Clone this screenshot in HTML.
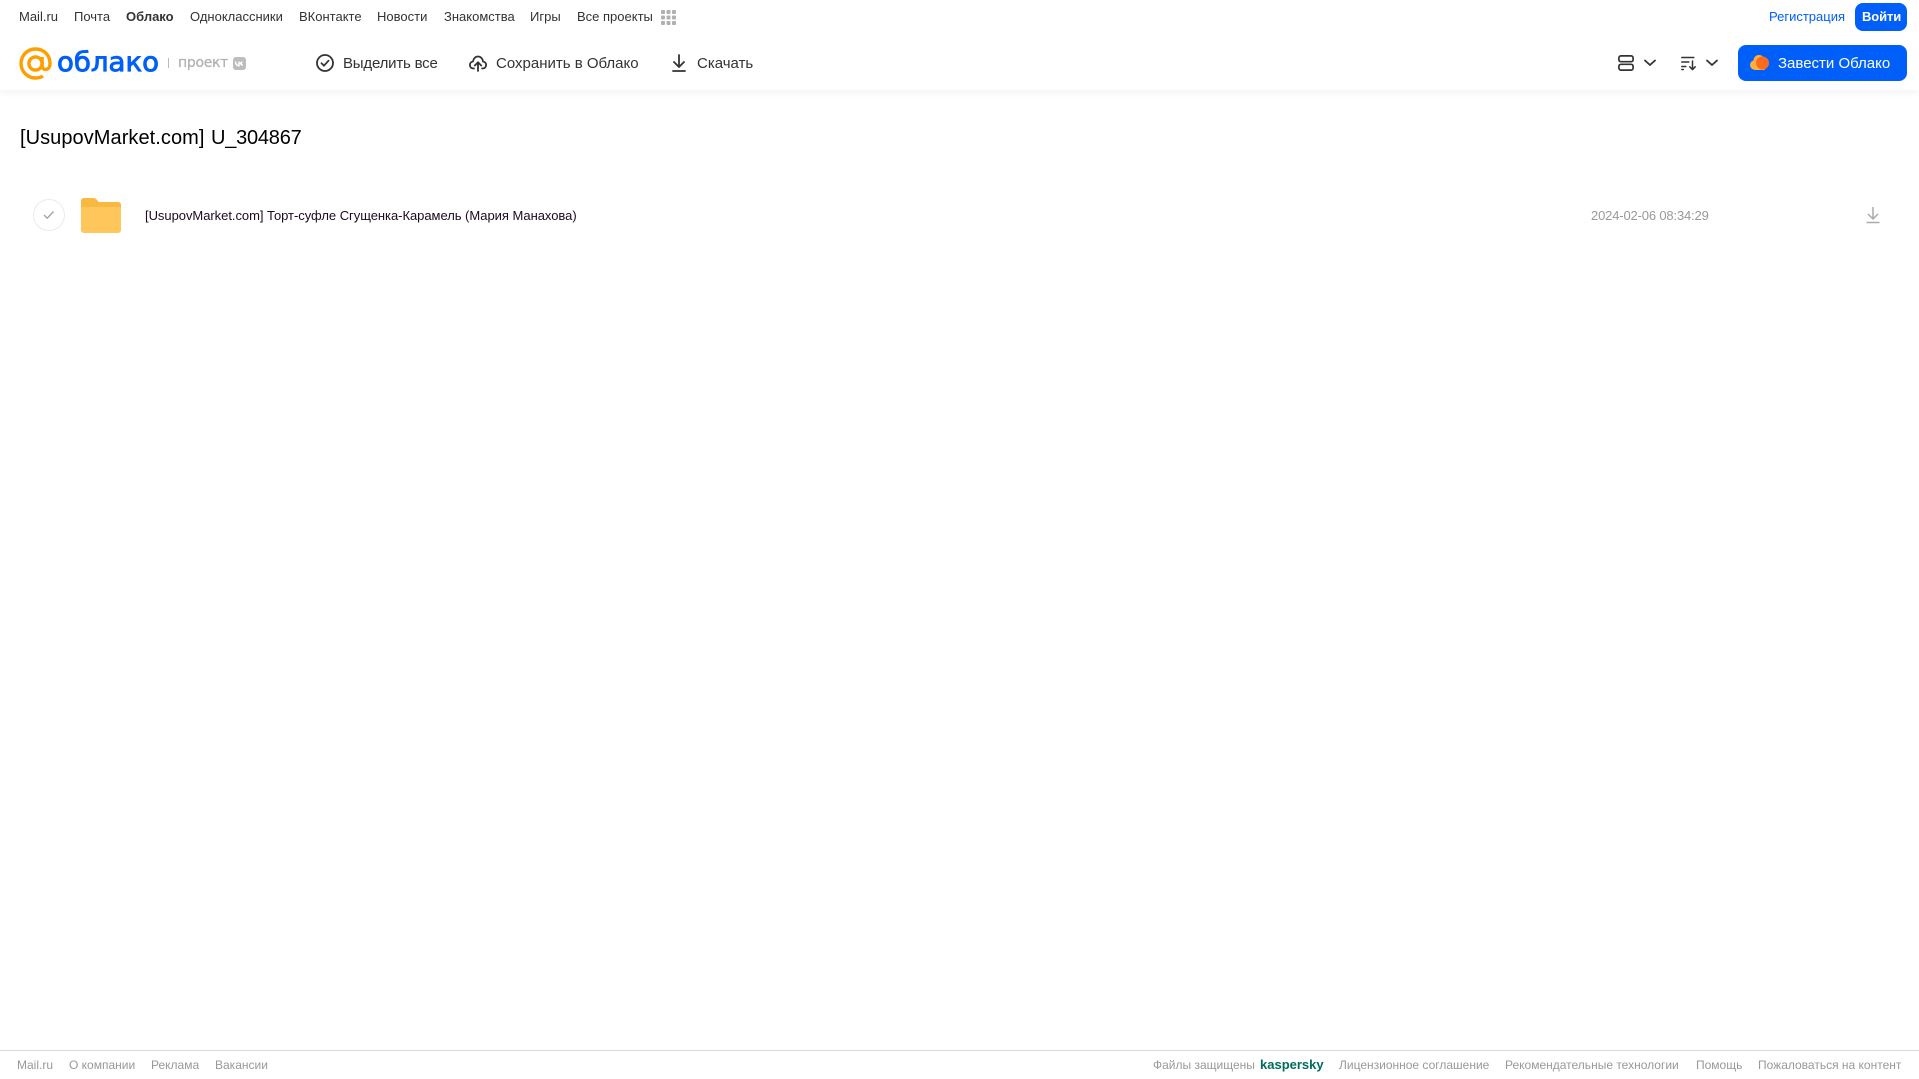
<!DOCTYPE html>
<html lang="ru"><head><meta charset="utf-8"><title>Облако</title>
<style>
html,body{margin:0;padding:0;background:#fff;width:1919px;height:1079px;overflow:hidden}
body{position:relative;font-family:"Liberation Sans",sans-serif}
.t{position:absolute;white-space:nowrap;line-height:20px}
.n{top:7px;font-size:13px;color:#333}
.a{top:54px;font-size:15px;color:#333}
.f{top:1055px;font-size:12px;color:#999}
svg{position:absolute;overflow:visible}
</style></head><body>
<div style="position:absolute;left:0;top:0;width:1919px;height:90px;background:#fff;box-shadow:0 2px 8px rgba(0,0,0,.06)"></div>

<span class="t n" style="left:19px">Mail.ru</span>
<span class="t n" style="left:74px">Почта</span>
<span class="t n" style="left:126px;font-weight:bold">Облако</span>
<span class="t n" style="left:190px">Одноклассники</span>
<span class="t n" style="left:299px">ВКонтакте</span>
<span class="t n" style="left:377px">Новости</span>
<span class="t n" style="left:444px">Знакомства</span>
<span class="t n" style="left:530px">Игры</span>
<span class="t n" style="left:577px">Все проекты</span>
<svg style="left:661px;top:10px" width="15" height="15" fill="#b0b0b0"><rect x="0" y="0" width="4" height="4" rx="1"/><rect x="5.500" y="0" width="4" height="4" rx="1"/><rect x="11" y="0" width="4" height="4" rx="1"/><rect x="0" y="5.500" width="4" height="4" rx="1"/><rect x="5.500" y="5.500" width="4" height="4" rx="1"/><rect x="11" y="5.500" width="4" height="4" rx="1"/><rect x="0" y="11" width="4" height="4" rx="1"/><rect x="5.500" y="11" width="4" height="4" rx="1"/><rect x="11" y="11" width="4" height="4" rx="1"/></svg>

<span class="t n" style="left:1769px;color:#005ff9">Регистрация</span>
<div style="position:absolute;left:1855px;top:3px;width:52px;height:28px;background:#005ff9;border-radius:8px"></div>
<span class="t n" style="left:1862px;color:#fff;font-weight:bold;font-size:13px;letter-spacing:-.1px">Войти</span>

<svg style="left:19px;top:47px" width="33" height="33" viewBox="0 0 33 33" fill="none" stroke="#ff9e00" stroke-width="3.400"><circle cx="16.500" cy="16.500" r="6.600"/><path d="M23.100 10v8.500c0 5.500 7.600 5.500 7.900-1.500C31.300 8 24.500 2 16.500 2 8.500 2 2 8.500 2 16.500S8.500 31 16.500 31c3 0 5.500-.7 7.500-2"/></svg>
<svg style="left:57px;top:44px" width="104" height="36"><text x="0" y="27" font-family="'DejaVu Sans',sans-serif" font-size="27" fill="#005ff9" stroke="#005ff9" stroke-width=".9" textLength="102" lengthAdjust="spacingAndGlyphs">облако</text></svg>
<div style="position:absolute;left:168px;top:58px;width:1px;height:10px;background:#bbb"></div>
<span class="t" style="left:178px;top:53px;font-family:'DejaVu Sans',sans-serif;font-size:14px;letter-spacing:-.3px;color:#b2b2b2;-webkit-text-stroke:.3px #b2b2b2">проект</span>
<div style="position:absolute;left:233px;top:57px;width:13px;height:13px;background:#bdbdbd;border-radius:3px"></div>
<svg style="left:233px;top:57px" width="13" height="13" fill="none" stroke="#fff" stroke-width="1.400"><path d="M2.500 4.500c.3 3 1.800 4.300 3.500 4.300V4.500M6 6.500c1.500 0 2.600-.8 3-2M6 6.500c1.500 0 3 1 3.500 2.300"/></svg>

<svg style="left:316px;top:54px" width="18" height="18" fill="none" stroke="#333" stroke-width="1.800"><circle cx="9" cy="9" r="8"/><path d="M5.500 9.200l2.500 2.500 4.500-5" stroke-linecap="round" stroke-linejoin="round"/></svg>
<span class="t a" style="left:343px;letter-spacing:-.2px">Выделить все</span>
<svg style="left:469px;top:54px" width="18" height="18" fill="none" stroke="#333" stroke-width="1.800" stroke-linecap="round" stroke-linejoin="round"><path d="M5 14.500H4.500C2 14.500 .9 12.700 .9 11c0-1.900 1.400-3.300 3.100-3.500C4.400 4.500 6.500 2.500 9 2.500s4.700 2 5 5c1.800.2 3.100 1.600 3.100 3.500 0 1.700-1.100 3.500-3.600 3.500H13"/><path d="M9 17V8.500M5.800 11.500L9 8.300l3.200 3.200"/></svg>
<span class="t a" style="left:496px">Сохранить в Облако</span>
<svg style="left:672px;top:54px" width="14" height="18" fill="none" stroke="#333" stroke-width="1.800" stroke-linecap="round"><path d="M7 1v11.500M2 8l5 5 5-5" stroke-linejoin="round"/><path d="M1 17h12"/></svg>
<span class="t a" style="left:697px">Скачать</span>

<svg style="left:1618px;top:55px" width="16" height="16" fill="none" stroke="#333" stroke-width="1.700"><rect x=".9" y=".9" width="14.200" height="5.800" rx="2"/><rect x=".9" y="9.300" width="14.200" height="5.800" rx="2"/></svg>
<svg style="left:1644px;top:59px" width="13" height="8" fill="none" stroke="#333" stroke-width="1.800" stroke-linecap="round" stroke-linejoin="round"><path d="M1 1.500l5 4.500 5-4.500"/></svg>
<svg style="left:1681px;top:56px" width="16" height="15" fill="none" stroke="#333" stroke-width="1.500" stroke-linecap="round"><path d="M.8 1.500h12M.8 6h7M.8 10.500h4M.8 13.500h1.500"/><path d="M11.500 5v8.500M8.800 10.800l2.700 2.800 2.700-2.800" stroke-linejoin="round"/></svg>
<svg style="left:1706px;top:59px" width="13" height="8" fill="none" stroke="#333" stroke-width="1.800" stroke-linecap="round" stroke-linejoin="round"><path d="M1 1.500l5 4.500 5-4.500"/></svg>

<div style="position:absolute;left:1738px;top:45px;width:169px;height:36px;background:#005ff9;border-radius:8px"></div>
<svg style="left:1750px;top:55px" width="19" height="15"><circle cx="4.800" cy="10" r="4.800" fill="#ffb03a"/><circle cx="9" cy="5.500" r="5.500" fill="#ffb03a"/><rect x="4.800" y="8" width="10" height="7" fill="#ffb03a"/><circle cx="12.500" cy="8" r="6.500" fill="#ff6a1f"/></svg>
<span class="t a" style="left:1778px;color:#fff">Завести Облако</span>

<div class="t" style="left:20px;top:125px;font-size:20px;line-height:27px;color:#000"><span style="letter-spacing:.06px">[UsupovMarket.com]</span><span style="letter-spacing:-.22px;margin-left:6.500px">U_304867</span></div>

<div style="position:absolute;left:33px;top:199px;width:30px;height:30px;border:1px solid #ebebeb;border-radius:50%"></div>
<svg style="left:43px;top:210px" width="12" height="10" fill="none" stroke="#a0a0a0" stroke-width="1.300"><path d="M1 5l3.200 3.200L10.500 1.500"/></svg>
<svg style="left:81px;top:198px" width="40" height="35"><path d="M0 3a3 3 0 0 1 3-3h9c3 0 4 2 5.500 4H37a3 3 0 0 1 3 3v25a3 3 0 0 1-3 3H3a3 3 0 0 1-3-3z" fill="#ffc65c"/><path d="M0 3a3 3 0 0 1 3-3h9c3 0 4 2 5.500 4H37a3 3 0 0 1 3 3v2H0z" fill="#f9b840"/></svg>
<span class="t" style="left:145px;top:206px;font-size:13px;color:#200820;letter-spacing:-.04px">[UsupovMarket.com] Торт-суфле Сгущенка-Карамель (Мария Манахова)</span>
<span class="t" style="left:1591px;top:206px;font-size:13px;color:#999;letter-spacing:-.16px">2024-02-06 08:34:29</span>
<svg style="left:1866px;top:206px" width="14" height="18" fill="none" stroke="#aaa" stroke-width="1.500"><path d="M7 1v11.500M2 8l5 5 5-5"/><path d="M.5 16.500h13"/></svg>

<div style="position:absolute;left:0;top:1050px;width:1919px;height:1px;background:#d9d9d9"></div>
<span class="t f" style="left:17px">Mail.ru</span>
<span class="t f" style="left:69px">О компании</span>
<span class="t f" style="left:151px">Реклама</span>
<span class="t f" style="left:215px">Вакансии</span>
<span class="t f" style="left:1153px">Файлы защищены</span>
<span class="t f" style="left:1260px;color:#006d5c;font-weight:bold;font-size:13px">kaspersky</span>
<span class="t f" style="left:1339px">Лицензионное соглашение</span>
<span class="t f" style="left:1505px">Рекомендательные технологии</span>
<span class="t f" style="left:1696px">Помощь</span>
<span class="t f" style="left:1758px">Пожаловаться на контент</span>
</body></html>
